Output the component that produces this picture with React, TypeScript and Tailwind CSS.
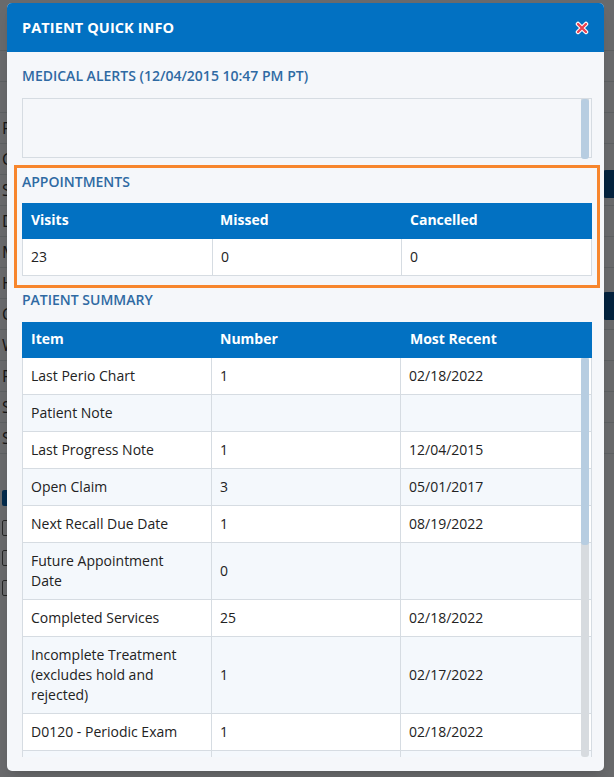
import React, { JSX } from 'react';

interface SummaryRow {
    item: string[];
    number: string;
    recent: string;
}

const summaryRows: SummaryRow[] = [
    { item: ['Last Perio Chart'], number: '1', recent: '02/18/2022' },
    { item: ['Patient Note'], number: '', recent: '' },
    { item: ['Last Progress Note'], number: '1', recent: '12/04/2015' },
    { item: ['Open Claim'], number: '3', recent: '05/01/2017' },
    { item: ['Next Recall Due Date'], number: '1', recent: '08/19/2022' },
    { item: ['Future Appointment', 'Date'], number: '0', recent: '' },
    { item: ['Completed Services'], number: '25', recent: '02/18/2022' },
    { item: ['Incomplete Treatment', '(excludes hold and', 'rejected)'], number: '1', recent: '02/17/2022' },
    { item: ['D0120 - Periodic Exam'], number: '1', recent: '02/18/2022' },
    { item: ['\u00a0'], number: '', recent: '' },
];

const bgLabels = ['', '', '', 'P', 'C', 'S', 'D', 'M', 'H', 'C', 'W', 'P', 'S', 'S'];

function CloseIcon(): JSX.Element {
    return (
        <svg width="14" height="14" viewBox="0 0 14 14">
            <path d="M3 3 L11 11 M11 3 L3 11" stroke="#ffffff" strokeWidth="4.5" strokeLinecap="round" />
            <path d="M3 3 L11 11 M11 3 L3 11" stroke="#e8414f" strokeWidth="2.4" strokeLinecap="round" />
        </svg>
    );
}

function Scrollbar({ thumbHeight }: { thumbHeight: number }): JSX.Element {
    return (
        <div className="absolute right-[2px] top-0 bottom-0 w-[8px] bg-[#d7dbdf] rounded-b-[3px]">
            <div className="w-full rounded-[3px] bg-[#b7cde1]" style={{ height: thumbHeight }} />
        </div>
    );
}

export default function App(): JSX.Element {
    return (
        <div
            className="relative w-[614px] h-[777px] overflow-hidden bg-[#e9ecef] text-[#222]"
            style={{ fontFamily: '"Open Sans", "Liberation Sans", sans-serif' }}
        >
            {/* page behind the dialog */}
            <div className="flex flex-col pt-[20px]">
                {bgLabels.map((label, i) => (
                    <div key={i} className="h-[31px] border-b border-[#cfd4d9] px-[2px] text-[16px] leading-[31px] text-[#333]">
                        {label}
                    </div>
                ))}
                <div className="flex flex-col gap-[14px] pl-[2px] pt-[36px]">
                    <div className="w-[14px] h-[16px] rounded-[2px] bg-[#0b5fa8]" />
                    <div className="w-[14px] h-[16px] rounded-[2px] border border-[#555]" />
                    <div className="w-[14px] h-[16px] rounded-[2px] border border-[#555]" />
                    <div className="w-[14px] h-[16px] rounded-[2px] border border-[#555]" />
                </div>
            </div>
            <div className="absolute right-0 top-[170px] w-[14px] h-[28px] rounded-l-[6px] bg-[#0b4f8a]" />
            <div className="absolute right-0 top-[292px] w-[14px] h-[28px] rounded-l-[6px] bg-[#0b4f8a]" />
            <div className="absolute inset-0 bg-black/55" />

            {/* dialog */}
            <div className="absolute left-[7px] top-[3px] w-[597px] h-[768px] rounded-[5px] bg-[#f5f7fa] overflow-hidden shadow-lg flex flex-col">
                <div className="h-[49px] shrink-0 bg-[#0271c2] flex items-center justify-between pl-[15px] pr-[15px]">
                    <span className="text-white text-[14.5px] font-bold tracking-[0.1px]">PATIENT QUICK INFO</span>
                    <CloseIcon />
                </div>

                <div className="flex flex-col pl-[15px] pr-[12px]">
                    <div className="mt-[14px] text-[14px] leading-[20px] font-semibold text-[#2f6aa3]">
                        MEDICAL ALERTS (12/04/2015 10:47 PM PT)
                    </div>
                    <div className="relative mt-[12px] h-[60px] border border-[#d6dce2] bg-[#f5f7fa]">
                        <Scrollbar thumbHeight={60} />
                    </div>

                    <div className="mt-[7px] -mx-[8px] border-[3px] border-[#f7862d] px-[5px] pt-[4px] pb-[9px]">
                        <div className="text-[14px] leading-[20px] font-semibold text-[#2f6aa3]">APPOINTMENTS</div>
                        <div className="mt-[11px] grid grid-cols-[190px_189px_1fr] bg-[#0271c2] h-[36px] items-center text-white text-[14px] leading-[18px] font-bold pb-[3px]">
                            <div className="pl-[9px]">Visits</div>
                            <div className="pl-[8px]">Missed</div>
                            <div className="pl-[9px]">Cancelled</div>
                        </div>
                        <div className="grid grid-cols-[190px_189px_1fr] bg-white border border-t-0 border-[#d6dce2] text-[14px] leading-[20px]">
                            <div className="px-[8px] py-[8px] border-r border-[#d6dce2]">23</div>
                            <div className="px-[8px] py-[8px] border-r border-[#d6dce2]">0</div>
                            <div className="px-[8px] py-[8px]">0</div>
                        </div>
                    </div>

                    <div className="mt-[2px] text-[14px] leading-[20px] font-semibold text-[#2f6aa3]">PATIENT SUMMARY</div>
                    <div className="mt-[12px] grid grid-cols-[190px_189px_1fr] bg-[#0271c2] h-[36px] items-center text-white text-[14px] leading-[18px] font-bold pb-[3px]">
                        <div className="pl-[9px]">Item</div>
                        <div className="pl-[8px]">Number</div>
                        <div className="pl-[9px]">Most Recent</div>
                    </div>
                    <div className="relative h-[399px] overflow-hidden border-l border-r border-[#d6dce2]">
                        {summaryRows.map((row, i) => (
                            <div
                                key={i}
                                className={`grid grid-cols-[189px_189px_1fr] border-b border-[#d6dce2] text-[14px] leading-[20px] ${i % 2 === 0 ? 'bg-white' : 'bg-[#f4f8fc]'}`}
                            >
                                <div className="px-[8px] py-[8px] border-r border-[#d6dce2] flex flex-col justify-center">
                                    {row.item.map((line, j) => (
                                        <span key={j}>{line}</span>
                                    ))}
                                </div>
                                <div className="px-[8px] py-[8px] border-r border-[#d6dce2] flex items-center">{row.number}</div>
                                <div className="px-[8px] py-[8px] flex items-center">{row.recent}</div>
                            </div>
                        ))}
                        <Scrollbar thumbHeight={187} />
                    </div>
                </div>
            </div>
        </div>
    );
}
